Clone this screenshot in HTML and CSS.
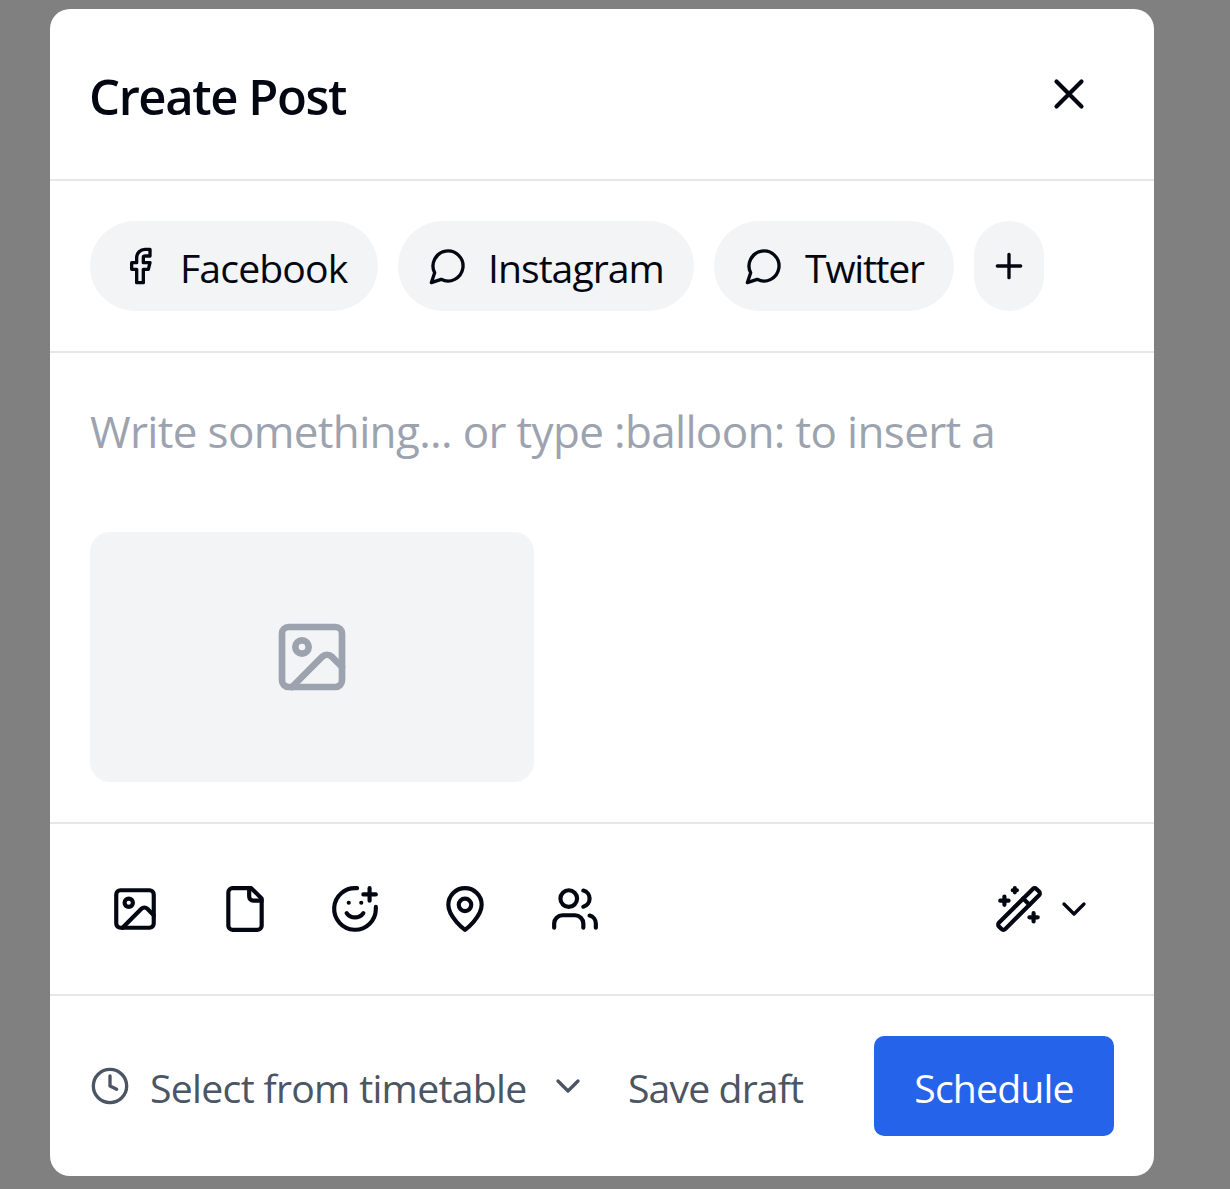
FILE: index.html
```html
<!DOCTYPE html>
<html lang="en">
<head>
<meta charset="utf-8">
<title>Create Post</title>
<link rel="stylesheet" href="styles.css">
</head>
<body>
<main class="dialog">
  <header class="header">
    <h1 class="title">Create Post</h1>
    <button class="close" aria-label="Close"><svg class="icon icon-md" viewBox="0 0 24 24"><path d="M18 6 6 18M6 6l12 12"/></svg></button>
  </header>
  <section class="channels">
    <button class="pill pill-facebook"><svg class="icon icon-sm" viewBox="0 0 24 24"><path d="M18 2h-3a5 5 0 0 0-5 5v3H7v4h3v8h4v-8h3l1-4h-4V7a1 1 0 0 1 1-1h3z"/></svg><span class="label facebook">Facebook</span></button>
    <button class="pill pill-instagram"><svg class="icon icon-sm" viewBox="0 0 24 24"><path d="M7.9 20A9 9 0 1 0 4 16.1L2 22Z"/></svg><span class="label instagram">Instagram</span></button>
    <button class="pill pill-twitter"><svg class="icon icon-sm" viewBox="0 0 24 24"><path d="M7.9 20A9 9 0 1 0 4 16.1L2 22Z"/></svg><span class="label twitter">Twitter</span></button>
    <button class="pill pill-add" aria-label="Add channel"><svg class="icon icon-sm" viewBox="0 0 24 24"><path d="M5 12h14M12 5v14"/></svg></button>
  </section>
  <section class="editor">
    <p class="placeholder">Write something... or type :balloon: to insert a</p>
    <div class="media"><svg class="icon icon-lg" viewBox="0 0 24 24"><rect x="3" y="3" width="18" height="18" rx="2"/><circle cx="9" cy="9" r="2"/><path d="m21 15-3.086-3.086a2 2 0 0 0-2.828 0L6 21"/></svg></div>
  </section>
  <section class="toolbar">
    <button class="tool" aria-label="Image"><svg class="icon icon-md" viewBox="0 0 24 24"><rect x="3" y="3" width="18" height="18" rx="2"/><circle cx="9" cy="9" r="2"/><path d="m21 15-3.086-3.086a2 2 0 0 0-2.828 0L6 21"/></svg></button>
    <button class="tool" aria-label="File"><svg class="icon icon-md" viewBox="0 0 24 24"><path d="M15 2H6a2 2 0 0 0-2 2v16a2 2 0 0 0 2 2h12a2 2 0 0 0 2-2V7Z"/><path d="M14 2v4a2 2 0 0 0 2 2h4"/></svg></button>
    <button class="tool" aria-label="Emoji"><svg class="icon icon-md" viewBox="0 0 24 24"><path d="M22 11v1a10 10 0 1 1-9-10"/><path d="M8 14s1.5 2 4 2 4-2 4-2"/><path d="M9 9h.01M15 9h.01M16 5h6M19 2v6"/></svg></button>
    <button class="tool" aria-label="Location"><svg class="icon icon-md" viewBox="0 0 24 24"><path d="M20 10c0 6-8 12-8 12s-8-6-8-12a8 8 0 0 1 16 0Z"/><circle cx="12" cy="10" r="3"/></svg></button>
    <button class="tool" aria-label="People"><svg class="icon icon-md" viewBox="0 0 24 24"><path d="M16 21v-2a4 4 0 0 0-4-4H6a4 4 0 0 0-4 4v2"/><circle cx="9" cy="7" r="4"/><path d="M22 21v-2a4 4 0 0 0-3-3.87M16 3.13a4 4 0 0 1 0 7.75"/></svg></button>
    <button class="assist" aria-label="Assistant"><svg class="icon icon-md" viewBox="0 0 24 24"><path d="m21.64 3.64-1.28-1.28a1.21 1.21 0 0 0-1.72 0L2.36 18.64a1.21 1.21 0 0 0 0 1.72l1.28 1.28a1.2 1.2 0 0 0 1.72 0L21.64 5.36a1.2 1.2 0 0 0 0-1.72"/><path d="m14 7 3 3M5 6v4M19 14v4M10 2v2M7 8H3M21 16h-4M11 3H9"/></svg><svg class="icon icon-sm" viewBox="0 0 24 24"><path d="m6 9 6 6 6-6"/></svg></button>
  </section>
  <footer class="footer">
    <button class="timetable"><svg class="icon icon-sm" viewBox="0 0 24 24"><circle cx="12" cy="12" r="10"/><path d="M12 6v6l4 2"/></svg><span class="label select">Select from timetable</span><svg class="icon icon-sm" viewBox="0 0 24 24"><path d="m6 9 6 6 6-6"/></svg></button>
    <button class="draft"><span class="label save">Save draft</span></button>
    <button class="schedule"><span class="label submit">Schedule</span></button>
  </footer>
</main>
</body>
</html>
```
FILE: styles.css
```css
* { box-sizing: border-box; }
body {
  margin: 0;
  height: 1189px;
  padding: 9px 0 0 50px;
  overflow: hidden;
  background: #808080;
  color: #030712;
  font-family: "Open Sans", "Noto Sans", sans-serif;
  font-size: 39.2px;
}
button {
  display: flex;
  align-items: center;
  padding: 0;
  border: 0;
  background: none;
  color: inherit;
  font: inherit;
}
.dialog {
  width: 1104px;
  height: 1167px;
  border-radius: 20px;
  background: #fff;
}
.icon {
  display: block;
  flex: none;
  fill: none;
  stroke: currentColor;
  stroke-width: 2;
  stroke-linecap: round;
  stroke-linejoin: round;
}
.icon-sm { width: 40px; height: 40px; }
.icon-md { width: 50px; height: 50px; }
.icon-lg { width: 80px; height: 80px; }
.label { white-space: nowrap; padding-top: 4px; line-height: 54px; }

.header, .channels, .toolbar {
  display: flex;
  align-items: center;
  height: 172px;
  padding: 0 40px;
  border-bottom: 2px solid #e5e7eb;
}
.header { justify-content: space-between; }
.title {
  margin: 0 0 0 -1px;
  padding-top: 4px;
  font-size: 49px;
  font-weight: 600;
  letter-spacing: -1.42px;
  line-height: 66px;
  white-space: nowrap;
}
.close { width: 90px; height: 90px; justify-content: center; }

.channels { gap: 20px; }
.pill {
  gap: 20px;
  height: 90px;
  padding-left: 30px;
  border-radius: 45px;
  background: #f3f4f6;
}
.pill-facebook { width: 288px; }
.pill-instagram { width: 296px; }
.pill-twitter { width: 240px; }
.pill-add { width: 70px; padding: 0 15px; }
.facebook { letter-spacing: -0.88px; }
.instagram { letter-spacing: -1px; }
.twitter { padding-left: 1px; letter-spacing: -1.3px; }

.editor {
  height: 471px;
  padding: 40px;
  border-bottom: 2px solid #e5e7eb;
}
.placeholder {
  height: 139px;
  margin: 0;
  padding-top: 8px;
  color: #9ca3af;
  font-size: 44px;
  letter-spacing: -0.66px;
  line-height: 60px;
  white-space: nowrap;
}
.media {
  display: flex;
  align-items: center;
  justify-content: center;
  width: 444px;
  height: 250px;
  border-radius: 20px;
  background: #f3f4f6;
  color: #9ca3af;
}

.toolbar { gap: 20px; }
.tool { width: 90px; height: 90px; justify-content: center; }
.assist { gap: 10px; margin-left: auto; padding-right: 20px; }

.footer {
  display: flex;
  align-items: center;
  height: 180px;
  padding: 0 40px;
  color: #4b5563;
}
.timetable { gap: 20px; width: 538px; }
.select { width: 378px; letter-spacing: -0.7px; text-align: left; }
.draft { width: 246px; }
.save { letter-spacing: -0.88px; }
.submit { letter-spacing: -0.86px; }
.schedule {
  justify-content: center;
  width: 240px;
  height: 100px;
  border-radius: 10px;
  background: #2563eb;
  color: #fff;
}
```
